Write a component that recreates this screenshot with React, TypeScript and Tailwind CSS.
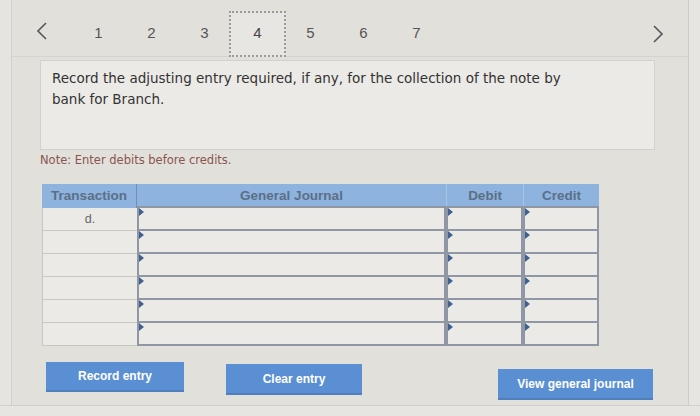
import React from "react";

const pages = ["1", "2", "3", "4", "5", "6", "7"];
const rows = [0, 1, 2, 3, 4, 5];

const Cell: React.FC<{ w: string }> = ({ w }) => (
  <div className={`relative ${w} h-[25px] bg-[#ebeae6] border-2 border-[#8f97a4] -mt-[2px] first:mt-0`}>
    {/* little entry marker */}
    <span className="absolute left-0 top-0 w-0 h-0 border-t-[4px] border-b-[4px] border-l-[5px] border-t-transparent border-b-transparent border-l-[#40618f]" />
  </div>
);

const Chevron: React.FC<{ dir: "left" | "right" }> = ({ dir }) => (
  <svg width="12" height="18" viewBox="0 0 12 18" fill="none" stroke="#555" strokeWidth="1.6">
    {dir === "left" ? <path d="M10 1 L2 9 L10 17" /> : <path d="M2 1 L10 9 L2 17" />}
  </svg>
);

const App: React.FC = () => {
  return (
    <div className="w-[700px] h-[416px] bg-[#e2e0db] flex flex-col font-['DejaVu_Sans',sans-serif] overflow-hidden">
      <div className="flex flex-1">
        {/* left edge */}
        <div className="w-[12px] bg-[#e6e4e0] border-r border-[#d2d0cb]" />

        <div className="flex-1 flex flex-col">
          {/* Step navigation */}
          <div className="flex items-center h-[46px] mt-[11px] border-b border-[#d5d3ce]">
            <span className="ml-[24px] w-[36px] -mt-[6px]">
              <Chevron dir="left" />
            </span>
            {pages.map((p) =>
              p === "4" ? (
                <div
                  key={p}
                  className="w-[57px] -mx-[2px] h-[46px] border-2 border-dotted border-[#9a9a9a] bg-[#e8e6e2] flex items-center justify-center text-[15px] text-[#444] font-['Liberation_Sans',sans-serif]"
                >
                  {p}
                </div>
              ) : (
                <div
                  key={p}
                  className="w-[53px] text-center text-[15px] text-[#555] font-['Liberation_Sans',sans-serif]"
                >
                  {p}
                </div>
              )
            )}
            <span className="ml-auto mr-[24px]">
              <Chevron dir="right" />
            </span>
          </div>

          {/* Question */}
          <div className="ml-[28px] mr-[33px] mt-[3px] h-[90px] bg-[#ebeae6] border border-[#d3d1cc] px-[11px] pt-[7px] text-[13.5px] leading-[21px] text-[#333]">
            Record the adjusting entry required, if any, for the collection of the note by
            <br />
            bank for Branch.
          </div>

          <div className="ml-[28px] mt-[2px] text-[11.5px] text-[#8a5550]">Note: Enter debits before credits.</div>

          {/* Journal table */}
          <div className="ml-[30px] mt-[15px] flex font-['Liberation_Sans',sans-serif]">
            <div className="w-[95px] flex flex-col">
              <div className="h-[24px] bg-[#8db3de] flex items-center justify-center text-[13.5px] font-bold text-[#5c6f86] border-r border-[#6e8fb8]">
                Transaction
              </div>
              {rows.map((r) => (
                <div
                  key={r}
                  className="h-[23px] bg-[#ebeae6] border-l border-b border-[#c9c7c2] flex items-center justify-center text-[12.5px] text-[#666]"
                >
                  {r === 0 ? "d." : ""}
                </div>
              ))}
            </div>
            <div className="w-[309px] flex flex-col">
              <div className="h-[24px] bg-[#8db3de] flex items-center justify-center text-[13.5px] font-bold text-[#5c6f86]">
                General Journal
              </div>
              {rows.map((r) => (
                <Cell key={r} w="w-[309px]" />
              ))}
            </div>
            <div className="w-[77px] flex flex-col">
              <div className="h-[24px] bg-[#8db3de] flex items-center justify-center text-[13.5px] font-bold text-[#5c6f86] border-l border-[#aac4e4]">
                Debit
              </div>
              {rows.map((r) => (
                <Cell key={r} w="w-[77px]" />
              ))}
            </div>
            <div className="w-[76px] flex flex-col">
              <div className="h-[24px] bg-[#8db3de] flex items-center justify-center text-[13.5px] font-bold text-[#5c6f86] border-l border-[#aac4e4]">
                Credit
              </div>
              {rows.map((r) => (
                <Cell key={r} w="w-[76px]" />
              ))}
            </div>
          </div>

          {/* Buttons */}
          <div className="flex items-start ml-[34px] mt-[16px] font-['Liberation_Sans',sans-serif] text-white text-[12px] font-bold">
            <button className="w-[138px] h-[30px] bg-[#5b8fd3] border-b-2 border-[#4f7fbf]">Record entry</button>
            <button className="ml-[42px] mt-[2px] w-[136px] h-[31px] bg-[#5b8fd3] border-b-2 border-[#4f7fbf]">
              Clear entry
            </button>
            <button className="ml-[136px] mt-[7px] w-[155px] h-[31px] bg-[#5b8fd3] border-b-2 border-[#4f7fbf]">
              View general journal
            </button>
          </div>
        </div>

        {/* right edge */}
        <div className="w-[12px] bg-[#e7e5e1] border-l border-[#cfcdc8]" />
      </div>
      <div className="h-[11px] bg-[#e7e5e1] border-t border-[#d2d0cb]" />
    </div>
  );
};

export default App;
